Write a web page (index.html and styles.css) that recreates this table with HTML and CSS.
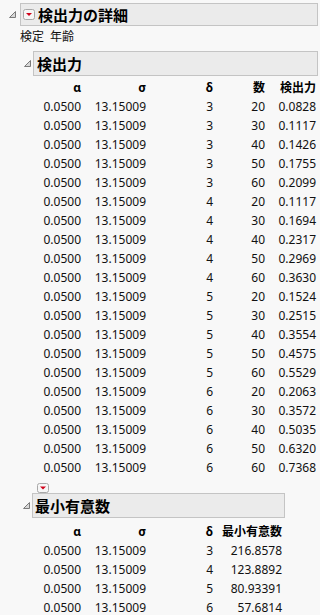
FILE: index.html
```html
<!DOCTYPE html>
<html lang="ja">
<head>
<meta charset="utf-8">
<link rel="stylesheet" href="styles.css">
</head>
<body>
<div class="report">
  <div class="hdr hdr1">
    <svg class="tri" width="7" height="7" viewBox="0 0 7 7"><polygon points="0.5,6.5 6.5,6.5 6.5,0.5" fill="#d8d8d8" stroke="#7a7a7a" stroke-width="1"/></svg>
    <div class="box">
      <span class="redbtn"><svg width="12" height="11" viewBox="0 0 12 11"><rect x="0.5" y="0.5" width="11" height="10" rx="2" fill="#f6f6f6" stroke="#a8a8a8"/><polygon points="3,4 9,4 6,7" fill="#d0021b"/></svg></span>
      <span class="title">検出力の詳細</span>
    </div>
  </div>
  <div class="test-line"><span>検定</span><span class="gap">年齢</span></div>

  <div class="hdr hdr2">
    <svg class="tri" width="7" height="7" viewBox="0 0 7 7"><polygon points="0.5,6.5 6.5,6.5 6.5,0.5" fill="#d8d8d8" stroke="#7a7a7a" stroke-width="1"/></svg>
    <div class="box"><span class="title">検出力</span></div>
  </div>
  <div class="table t1">
    <div class="th">α</div><div class="th">σ</div><div class="th">δ</div><div class="th">数</div><div class="th">検出力</div>
    <div>0.0500</div><div>13.15009</div><div>3</div><div>20</div><div>0.0828</div>
    <div>0.0500</div><div>13.15009</div><div>3</div><div>30</div><div>0.1117</div>
    <div>0.0500</div><div>13.15009</div><div>3</div><div>40</div><div>0.1426</div>
    <div>0.0500</div><div>13.15009</div><div>3</div><div>50</div><div>0.1755</div>
    <div>0.0500</div><div>13.15009</div><div>3</div><div>60</div><div>0.2099</div>
    <div>0.0500</div><div>13.15009</div><div>4</div><div>20</div><div>0.1117</div>
    <div>0.0500</div><div>13.15009</div><div>4</div><div>30</div><div>0.1694</div>
    <div>0.0500</div><div>13.15009</div><div>4</div><div>40</div><div>0.2317</div>
    <div>0.0500</div><div>13.15009</div><div>4</div><div>50</div><div>0.2969</div>
    <div>0.0500</div><div>13.15009</div><div>4</div><div>60</div><div>0.3630</div>
    <div>0.0500</div><div>13.15009</div><div>5</div><div>20</div><div>0.1524</div>
    <div>0.0500</div><div>13.15009</div><div>5</div><div>30</div><div>0.2515</div>
    <div>0.0500</div><div>13.15009</div><div>5</div><div>40</div><div>0.3554</div>
    <div>0.0500</div><div>13.15009</div><div>5</div><div>50</div><div>0.4575</div>
    <div>0.0500</div><div>13.15009</div><div>5</div><div>60</div><div>0.5529</div>
    <div>0.0500</div><div>13.15009</div><div>6</div><div>20</div><div>0.2063</div>
    <div>0.0500</div><div>13.15009</div><div>6</div><div>30</div><div>0.3572</div>
    <div>0.0500</div><div>13.15009</div><div>6</div><div>40</div><div>0.5035</div>
    <div>0.0500</div><div>13.15009</div><div>6</div><div>50</div><div>0.6320</div>
    <div>0.0500</div><div>13.15009</div><div>6</div><div>60</div><div>0.7368</div>
  </div>

  <div class="btnrow"><svg width="12" height="10" viewBox="0 0 12 10"><rect x="0.5" y="0.5" width="11" height="9" rx="2" fill="#f6f6f6" stroke="#a8a8a8"/><polygon points="3,3.5 9,3.5 6,6.5" fill="#d0021b"/></svg></div>
  <div class="hdr hdr3">
    <svg class="tri" width="7" height="7" viewBox="0 0 7 7"><polygon points="0.5,6.5 6.5,6.5 6.5,0.5" fill="#d8d8d8" stroke="#7a7a7a" stroke-width="1"/></svg>
    <div class="box"><span class="title">最小有意数</span></div>
  </div>
  <div class="table t2">
    <div class="th">α</div><div class="th">σ</div><div class="th">δ</div><div class="th">最小有意数</div>
    <div>0.0500</div><div>13.15009</div><div>3</div><div>216.8578</div>
    <div>0.0500</div><div>13.15009</div><div>4</div><div>123.8892</div>
    <div>0.0500</div><div>13.15009</div><div>5</div><div>80.93391</div>
    <div>0.0500</div><div>13.15009</div><div>6</div><div>57.6814</div>
  </div>
</div>
</body>
</html>
```
FILE: styles.css
```css
html, body {
  margin: 0;
  padding: 0;
  background: #f8f8f8;
}
body {
  font-family: "Noto Sans", "Noto Sans CJK JP", sans-serif;
  font-size: 12px;
  color: #111;
}
.report {
  padding-top: 3px;
}
.hdr {
  display: flex;
  align-items: center;
}
.tri {
  display: block;
  flex: none;
}
.box {
  box-sizing: border-box;
  display: flex;
  align-items: center;
  background: #ebebeb;
  border: 1px solid #c4c4c4;
}
.title {
  font-family: "Noto Sans CJK JP", sans-serif;
  font-weight: 700;
  font-size: 15px;
  line-height: 1;
  color: #000;
}
.hdr1 {
  margin-left: 9px;
  margin-right: 2px;
}
.hdr1 .tri {
  margin-right: 4px;
}
.hdr1 .box {
  flex: 1;
  height: 23px;
  padding-left: 2px;
}
.redbtn {
  display: flex;
  margin-right: 3px;
}
.redbtn svg {
  display: block;
}
.test-line {
  font-family: "Noto Sans CJK JP", sans-serif;
  padding-left: 20px;
  height: 19px;
  line-height: 19px;
}
.test-line .gap {
  margin-left: 6px;
}
.hdr2 {
  margin-top: 6px;
  margin-left: 24px;
  margin-right: 2px;
}
.hdr2 .tri {
  margin-right: 2px;
}
.hdr2 .box {
  flex: 1;
  height: 25px;
  padding-left: 3px;
}
.table {
  display: grid;
  margin-left: 33px;
}
.table > div {
  text-align: right;
  height: 19px;
  line-height: 19px;
  white-space: nowrap;
}
.table > .th {
  font-weight: 700;
  font-family: "Noto Sans", "Noto Sans CJK JP", sans-serif;
  color: #000;
}
.t1 {
  margin-top: 2px;
  grid-template-columns: 48px 65px 67px 52px 51px;
}
.t2 {
  margin-top: 4px;
  grid-template-columns: 48px 65px 67px 69px;
}
.btnrow {
  margin-top: 6px;
  padding-left: 37px;
  height: 10px;
}
.btnrow svg {
  display: block;
}
.hdr3 {
  margin-left: 23px;
}
.hdr3 .tri {
  margin-right: 2px;
}
.hdr3 .box {
  width: 253px;
  height: 25px;
  padding-left: 2px;
}
```
